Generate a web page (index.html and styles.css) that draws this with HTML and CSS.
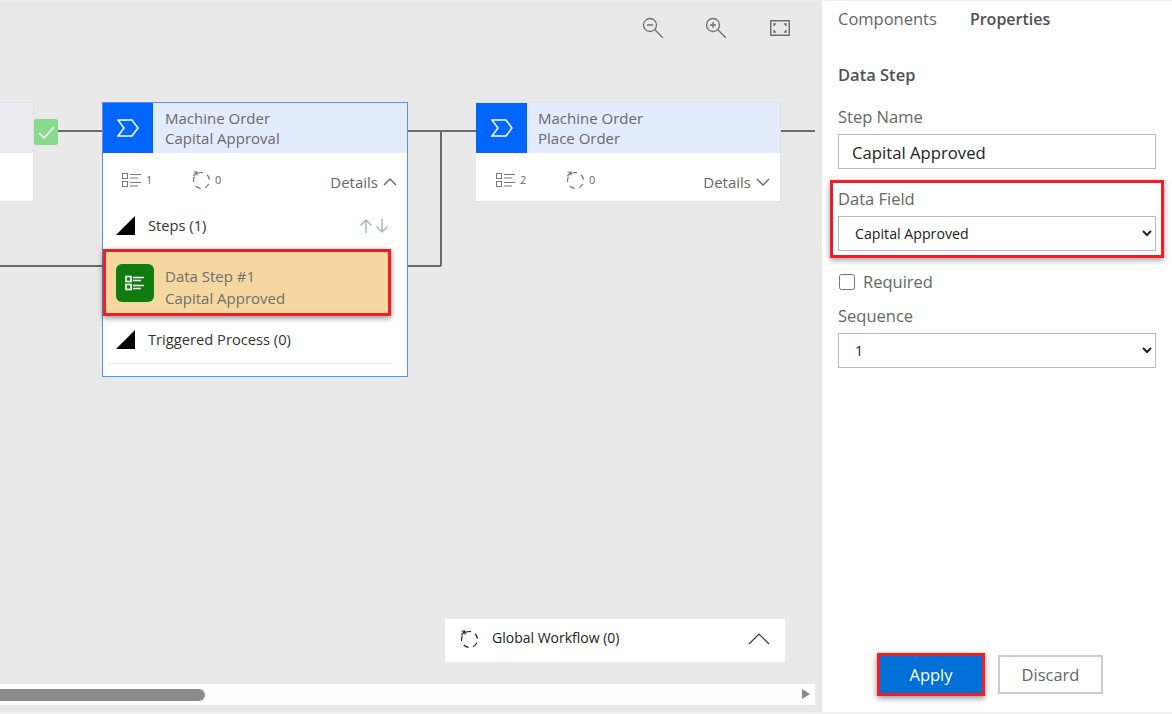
FILE: index.html
```html
<!DOCTYPE html>
<html lang="en">
<head>
<meta charset="utf-8">
<title>Process designer</title>
<link rel="stylesheet" href="styles.css">
</head>
<body>
<div class="app">
  <main class="canvas">
    <div class="zoom-tools">
      <svg class="tool" viewBox="0 0 22 22"><circle cx="8" cy="8" r="6.5"/><path d="M5 8h6M12.8 12.8l8 8"/></svg>
      <svg class="tool" viewBox="0 0 22 22"><circle cx="8" cy="8" r="6.5"/><path d="M5 8h6M8 5v6M12.8 12.8l8 8"/></svg>
      <svg class="tool tool-fit" viewBox="0 0 20 16"><rect x=".75" y=".75" width="18.5" height="14.5"/><path d="M6 4H4v2M14 4h2v2M6 12H4v-2M14 12h2v-2"/></svg>
    </div>

    <svg class="wires" viewBox="0 0 815 400">
      <path d="M58 131H102M408 131H476M780 131H815M441 131V266M390 266H441M0 266H102"/>
    </svg>

    <div class="node-stub">
      <div class="stub-head"></div>
    </div>
    <div class="check-badge">
      <svg viewBox="0 0 24 26"><path d="M5 14l5 5 10-11"/></svg>
    </div>

    <section class="node node-open">
      <header class="node-head">
        <div class="node-icon"><svg viewBox="0 0 22 18"><path d="M1 1h14l6 8-6 8H1l6-8z"/></svg></div>
        <div class="node-title">Machine Order<br>Capital Approval</div>
      </header>
      <div class="node-stats">
        <svg class="stat-list" viewBox="0 0 20 16"><rect x=".5" y="1.5" width="5" height="5"/><rect x=".5" y="9.5" width="5" height="5"/><path d="M8 2.500h11M8 6h8M8 10.500h11M8 14h8"/></svg>
        <span class="stat-num">1</span>
        <svg class="stat-loop" viewBox="0 0 20 20"><circle class="loop-ring" cx="10.500" cy="10.500" r="8"/><path d="M2.500 6l3.500-4M2.500 2h3.500v3.500"/></svg>
        <span class="stat-num">0</span>
        <span class="details">Details <svg class="chev" viewBox="0 0 14 8"><path d="M1 7l6-6 6 6"/></svg></span>
      </div>
      <div class="section-row">
        <i class="tri"></i><span class="section-label">Steps (1)</span>
        <svg class="arrows" viewBox="0 0 30 16"><path d="M7 15V2M1.500 7.500L7 2l5.500 5.500M23 1v13M17.500 8.500L23 14l5.500-5.500"/></svg>
      </div>
      <div class="step-card">
        <div class="step-icon"><svg viewBox="0 0 20 16"><rect x="1" y="1.500" width="5" height="5"/><rect x="1" y="9.500" width="5" height="5"/><path d="M8 2.500h11M8 5.500h8M8 10.500h11M8 13.500h8"/></svg></div>
        <div class="step-text">Data Step #1<br>Capital Approved</div>
      </div>
      <div class="section-row section-row-last">
        <i class="tri"></i><span class="section-label">Triggered Process (0)</span>
      </div>
    </section>

    <section class="node node-closed">
      <header class="node-head">
        <div class="node-icon"><svg viewBox="0 0 22 18"><path d="M1 1h14l6 8-6 8H1l6-8z"/></svg></div>
        <div class="node-title">Machine Order<br>Place Order</div>
      </header>
      <div class="node-stats">
        <svg class="stat-list" viewBox="0 0 20 16"><rect x=".5" y="1.5" width="5" height="5"/><rect x=".5" y="9.5" width="5" height="5"/><path d="M8 2.500h11M8 6h8M8 10.500h11M8 14h8"/></svg>
        <span class="stat-num">2</span>
        <svg class="stat-loop" viewBox="0 0 20 20"><circle class="loop-ring" cx="10.500" cy="10.500" r="8"/><path d="M2.500 6l3.500-4M2.500 2h3.500v3.500"/></svg>
        <span class="stat-num">0</span>
        <span class="details">Details <svg class="chev" viewBox="0 0 14 8"><path d="M1 1l6 6 6-6"/></svg></span>
      </div>
    </section>

    <div class="global-flow">
      <svg class="global-loop" viewBox="0 0 20 20"><circle class="loop-ring" cx="10.500" cy="10.500" r="8"/><path d="M2.500 6l3.500-4M2.500 2h3.500v3.500"/></svg>
      <span class="global-label">Global Workflow (0)</span>
      <svg class="global-chev" viewBox="0 0 22 12"><path d="M1 11L11 1l10 10"/></svg>
    </div>

    <div class="h-scroll">
      <div class="h-thumb"></div>
      <i class="h-arrow"></i>
    </div>
  </main>

  <aside class="panel">
    <nav class="tabs">
      <span class="tab">Components</span>
      <span class="tab tab-active">Properties</span>
    </nav>
    <h2 class="panel-title">Data Step</h2>
    <div class="field field-name">
      <label class="field-label">Step Name</label>
      <input class="text-input" type="text" value="Capital Approved">
    </div>
    <div class="field field-marked">
      <label class="field-label">Data Field</label>
      <select class="select"><option>Capital Approved</option></select>
    </div>
    <label class="check-row"><input class="check" type="checkbox"><span>Required</span></label>
    <div class="field field-seq">
      <label class="field-label">Sequence</label>
      <select class="select"><option>1</option></select>
    </div>
    <div class="actions">
      <button class="btn btn-apply">Apply</button>
      <button class="btn btn-discard">Discard</button>
    </div>
  </aside>
</div>
</body>
</html>
```
FILE: styles.css
```css
* { box-sizing: border-box; }
html, body { margin: 0; height: 100%; }
body {
  background: #f0f0f0;
  font-family: "Open Sans", "Noto Sans", sans-serif;
  overflow: hidden;
}
.app {
  display: flex;
  width: 1172px;
  height: 711px;
  margin-top: 1px;
  background: #e9e9e9;
}
.canvas {
  position: relative;
  width: 822px;
  flex: none;
  overflow: hidden;
  background: #e9e9e9;
}
.zoom-tools {
  position: absolute;
  top: 16px;
  left: 642px;
  display: flex;
  align-items: flex-start;
  gap: 41px;
}
.tool { width: 22px; height: 22px; fill: none; stroke: #707070; stroke-width: 1.3; }
.tool-fit { width: 20px; height: 16px; margin: 3px 0 0 2px; stroke-width: 1.5; }
.wires {
  position: absolute;
  left: 0;
  top: -1px;
  width: 815px;
  height: 400px;
  fill: none;
  stroke: #6b6b6b;
  stroke-width: 2;
}
.node-stub {
  position: absolute;
  left: 0;
  top: 101px;
  width: 34px;
  height: 100px;
  background: #fff;
  border: 1px solid #e2e2e2;
  border-left: 0;
}
.stub-head { height: 50px; background: #eceaf3; }
.check-badge {
  position: absolute;
  left: 34px;
  top: 118px;
  width: 24px;
  height: 26px;
  background: #88da8c;
  border-radius: 2px;
}
.check-badge svg { display: block; fill: none; stroke: #fff; stroke-width: 1.500; }
.node {
  position: absolute;
  background: #fff;
  color: #666;
}
.node-open {
  left: 102px;
  top: 101px;
  width: 306px;
  height: 275px;
  border: 1px solid #4f94f8;
}
.node-closed {
  left: 476px;
  top: 101px;
  width: 305px;
  height: 100px;
  border: 1px solid #e2e2e2;
  border-left: 0;
}
.node-head {
  display: flex;
  height: 50px;
  background: #e2ecfd;
}
.node-icon {
  display: flex;
  align-items: center;
  justify-content: center;
  width: 50px;
  flex: none;
  background: #0066ff;
}
.node-closed .node-icon { width: 51px; }
.node-closed .node-title { padding-left: 11px; }
.node-closed .node-stats { padding-left: 20px; }
.node-icon svg { width: 22px; height: 18px; fill: none; stroke: #fff; stroke-width: 1.500; }
.node-title {
  padding: 6px 0 0 12px;
  font-size: 15px;
  line-height: 19.5px;
  color: #6a6a6a;
}
.node-stats {
  position: relative;
  display: flex;
  align-items: center;
  height: 49px;
  padding: 4px 0 0 19px;
  color: #666;
}
.stat-list { width: 20px; height: 16px; fill: none; stroke: #777; stroke-width: 1; }
.stat-num { margin-left: 4px; font-size: 11px; width: 45px; }
.stat-num:last-of-type { width: auto; }
.stat-loop { width: 20px; height: 20px; fill: none; stroke: #777; stroke-width: 1.200; }
.loop-ring { stroke-dasharray: 5.500 4.550; stroke-dashoffset: -3.350; }
.details {
  position: absolute;
  right: 10px;
  top: 19px;
  display: flex;
  align-items: center;
  gap: 5px;
  font-size: 15px;
  line-height: 20px;
  white-space: nowrap;
}
.chev { width: 14px; height: 8px; fill: none; stroke: #666; stroke-width: 1.300; }
.section-row {
  display: flex;
  align-items: center;
  height: 47px;
  padding: 0 18px 0 13px;
  color: #333;
  font-size: 14.700px;
}
.tri {
  width: 19px;
  height: 19px;
  flex: none;
  background: #000;
  clip-path: polygon(100% 0, 100% 100%, 0 100%);
}
.section-label { margin: -2px 0 0 13px; flex: 1; }
.arrows { width: 30px; height: 16px; fill: none; stroke: #a9b4c4; stroke-width: 1.500; }
.step-card {
  display: flex;
  align-items: center;
  width: 288px;
  height: 67px;
  padding-left: 10px;
  background: #f4d8a0;
  border: 3px solid #ee2026;
  box-shadow: 0 2px 6px rgba(0, 0, 0, .45);
  color: #6f6f6f;
}
.step-icon {
  display: flex;
  align-items: center;
  justify-content: center;
  width: 38px;
  height: 38px;
  flex: none;
  background: #107c10;
  border-radius: 6px;
}
.step-icon svg { width: 20px; height: 16px; fill: none; stroke: #fff; stroke-width: 1.600; }
.step-text { margin: 8px 0 0 11px; font-size: 15px; line-height: 22px; }
.section-row-last {
  height: 48px;
  margin: 0 14px 0 5px;
  padding: 0 0 0 8px;
  border-bottom: 1px solid #eee;
}
.global-flow {
  position: absolute;
  left: 445px;
  top: 618px;
  display: flex;
  align-items: center;
  width: 340px;
  height: 43px;
  padding: 0 15px 0 14px;
  background: #fff;
  color: #222;
}
.global-loop { width: 20px; height: 20px; margin-top: -4px; fill: none; stroke: #222; stroke-width: 1.200; }
.global-label { margin: -7px 0 0 13px; flex: 1; font-size: 14px; }
.global-chev { width: 22px; height: 12px; margin-top: -3px; fill: none; stroke: #333; stroke-width: 1.200; }
.h-scroll {
  position: absolute;
  left: 0;
  top: 683px;
  width: 815px;
  height: 21px;
  background: #fdfdfd;
}
.h-thumb {
  width: 205px;
  height: 12px;
  margin-top: 5px;
  background: #8b8b8b;
  border-radius: 0 6px 6px 0;
}
.h-arrow {
  position: absolute;
  right: 5px;
  top: 5px;
  border-left: 8px solid #8b8b8b;
  border-top: 5px solid transparent;
  border-bottom: 5px solid transparent;
}
.panel {
  display: flex;
  flex-direction: column;
  width: 350px;
  flex: none;
  padding: 0 16px;
  background: #fff;
  color: #555;
}
.tabs { display: flex; gap: 33px; height: 36px; padding-top: 6px; font-size: 16.500px; line-height: 24px; color: #666; }
.tab-active { font-weight: 600; font-size: 16px; color: #505050; }
.panel-title { margin: 26px 0 0; font-size: 16.500px; font-weight: 600; line-height: 24px; color: #505050; }
.field { display: flex; flex-direction: column; }
.field-name { margin-top: 19px; }
.field-label { font-size: 16.500px; line-height: 22px; color: #666; }
.text-input {
  height: 35px;
  margin-top: 6px;
  padding: 1px 13px 0;
  border: 1px solid #bbb;
  border-radius: 0;
  font: 16.700px/1 "Open Sans", sans-serif;
  color: #222;
}
.field-marked {
  height: 78px;
  margin: 11px -8px 0;
  padding: 5px 5px 0;
  border: 3px solid #ee2026;
  box-shadow: 0 2px 6px rgba(0, 0, 0, .4);
}
.select {
  height: 35px;
  margin-top: 6px;
  padding: 0 12px;
  border: 1px solid #bbb;
  border-radius: 0;
  background-color: #fff;
  font: 14.200px "Open Sans", sans-serif;
  color: #222;
}
.check-row {
  display: flex;
  align-items: center;
  gap: 8px;
  margin-top: 13px;
  font-size: 16.500px;
  line-height: 22px;
  color: #666;
}
.check { width: 16px; height: 16px; margin: 0 0 0 1px; }
.field-seq { margin-top: 12px; }
.actions { display: flex; align-items: center; gap: 13px; margin-top: auto; margin-bottom: 16px; padding-left: 39px; }
.btn { font: 16.500px "Open Sans", sans-serif; border-radius: 0; }
.btn-apply {
  width: 108px;
  height: 43px;
  background: #0070d8;
  border: 3px solid #ee2026;
  color: #fff;
  box-shadow: 0 2px 6px rgba(0, 0, 0, .45);
}
.btn-discard {
  width: 105px;
  height: 39px;
  background: #fff;
  border: 2px solid #ccc;
  color: #666;
}
```
